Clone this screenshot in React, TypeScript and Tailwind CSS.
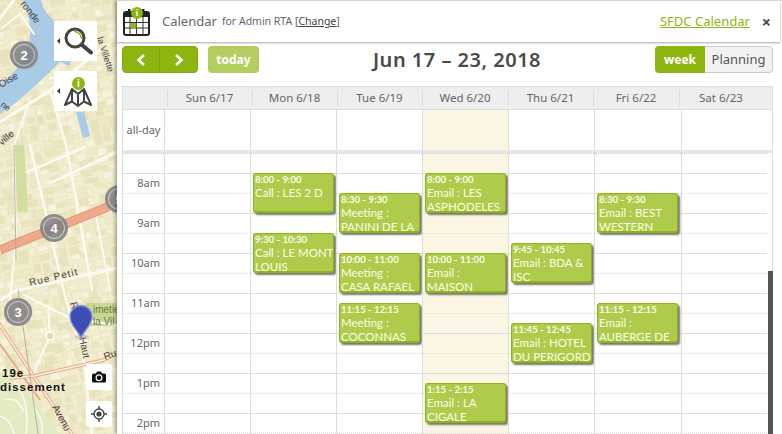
const font = "font-['Noto_Sans','Open_Sans',sans-serif]";

const hours = ["", "8am", "", "9am", "", "10am", "", "11am", "", "12pm", "", "1pm", "", "2pm"];

const days = [
  { label: "Sun 6/17", events: [] },
  {
    label: "Mon 6/18",
    events: [
      { start: 8, time: "8:00 - 9:00", title: "Call : LES 2 D" },
      { start: 9.5, time: "9:30 - 10:30", title: "Call\u00a0:\u00a0LE\u00a0MONT LOUIS" },
    ],
  },
  {
    label: "Tue 6/19",
    events: [
      { start: 8.5, time: "8:30 - 9:30", title: "Meeting : PANINI DE LA" },
      { start: 10, time: "10:00 - 11:00", title: "Meeting : CASA RAFAEL" },
      { start: 11.25, time: "11:15 - 12:15", title: "Meeting : COCONNAS" },
    ],
  },
  {
    label: "Wed 6/20",
    today: true,
    events: [
      { start: 8, time: "8:00 - 9:00", title: "Email : LES ASPHODELES" },
      { start: 10, time: "10:00 - 11:00", title: "Email : MAISON" },
      { start: 13.25, time: "1:15 - 2:15", title: "Email : LA CIGALE" },
    ],
  },
  {
    label: "Thu 6/21",
    events: [
      { start: 9.75, time: "9:45 - 10:45", title: "Email : BDA & ISC" },
      { start: 11.75, time: "11:45 - 12:45", title: "Email : HOTEL DU PERIGORD" },
    ],
  },
  {
    label: "Fri 6/22",
    wide: true,
    events: [
      { start: 8.5, time: "8:30 - 9:30", title: "Email : BEST WESTERN" },
      { start: 11.25, time: "11:15 - 12:15", title: "Email : AUBERGE DE" },
    ],
  },
  { label: "Sat 6/23", events: [] },
];

type Ev = { start: number; time: string; title: string };

// blocks for the map background, same numbers on every render
function blocks() {
  const out: { x: number; y: number; w: number; h: number; c: string }[] = [];
  let seed = 7;
  const rnd = () => {
    seed = (seed * 16807) % 2147483647;
    return seed / 2147483647;
  };
  const tones = ["#efe9c8", "#f4efd3", "#ebe5bf", "#f7f3dc", "#e9e3bb"];
  for (let y = -40; y < 480; y += 9) {
    for (let x = -40; x < 170; x += 10) {
      out.push({
        x: x + rnd() * 3,
        y: y + rnd() * 3,
        w: 5 + rnd() * 6,
        h: 4 + rnd() * 5,
        c: tones[Math.floor(rnd() * tones.length)],
      });
    }
  }
  return out;
}

function MapArt() {
  return (
    <svg width="117" height="434" viewBox="0 0 117 434" className="block">
      <rect width="117" height="434" fill="#f1edcf" />
      <g transform="rotate(-14 58 217)">
        {blocks().map((b, i) => (
          <rect key={i} x={b.x} y={b.y} width={b.w} height={b.h} fill={b.c} stroke="#e0dab2" strokeWidth="0.4" />
        ))}
      </g>
      {/* parks */}
      <path d="M14 145 L24 145 L28 212 L18 212 Z" fill="#d3dda0" />
      <path d="M0 372 L28 392 L60 434 L0 434 Z" fill="#e2ebc2" />
      <path d="M5 400 Q18 396 24 412 M14 382 Q30 398 26 434 M0 416 Q12 420 14 434 M34 408 Q44 420 42 434" fill="none" stroke="#fbfbf2" strokeWidth="1.6" />
      <path d="M86 303 H117 V326 H86 Z" fill="#c9d793" />
      {/* water */}
      <path d="M23 0 L41 0 Q44 14 58 24 L70 30 L70 66 L60 62 Q36 86 14 104 L0 114 L0 84 Q18 72 27 50 Q35 30 23 0 Z" fill="#a9cbe6" />
      <path d="M76 112 L84 112 L90 136 L83 138 Z" fill="#a9cbe6" />
      {/* white roads */}
      <g fill="none" stroke="#fbfaf3" strokeLinecap="round">
        <path d="M0 18 L14 0" strokeWidth="3" />
        <path d="M2 28 L20 14 L34 34" strokeWidth="2" />
        <path d="M0 122 L48 92 L100 50" strokeWidth="3" />
        <path d="M50 90 L66 145 L78 210 L92 290" strokeWidth="2.5" />
        <path d="M30 100 L14 145 L16 240 L10 300" strokeWidth="2" />
        <path d="M30 145 L63 288 L72 320" strokeWidth="2.5" />
        <path d="M27 172 L85 147" strokeWidth="2.5" />
        <path d="M50 183 L117 152" strokeWidth="2.5" />
        <path d="M0 300 L15 291 L117 268" strokeWidth="3" />
        <path d="M95 210 L110 290" strokeWidth="2" />
        <path d="M24 295 L70 318 L117 325" strokeWidth="2.5" />
        <path d="M48 306 L50 336 L34 372" strokeWidth="2" />
        <path d="M70 320 L82 345 L92 434" strokeWidth="2.5" />
      </g>
      <circle cx="50" cy="336" r="4" fill="#d8dcae" stroke="#fbfaf3" strokeWidth="2" />
      {/* main roads */}
      <path d="M0 250 L12 245 L108 207" fill="none" stroke="#d8917a" strokeWidth="9" />
      <path d="M0 250 L12 245 L108 207" fill="none" stroke="#f0a88a" strokeWidth="7.5" />
      <path d="M-2 322 L72 434" fill="none" stroke="#eaa88c" strokeWidth="3.5" />
      <path d="M-2 322 L72 434" fill="none" stroke="#fbf3e2" strokeWidth="1.5" />
      <path d="M0 344 L40 400" fill="none" stroke="#eaa88c" strokeWidth="2" />
      <path d="M10 378 L34 376 L104 360 L117 352" fill="none" stroke="#eaa88c" strokeWidth="3.5" />
      <path d="M10 378 L34 376 L104 360 L117 352" fill="none" stroke="#fbf3e2" strokeWidth="1.5" />
      {/* rail line */}
      <path d="M14 145 L16 260 M18 290 L38 434" stroke="#a8a58c" strokeWidth="0.8" fill="none" />
      {/* labels */}
      <g className="font-['Liberation_Sans',sans-serif]" fill="#444">
        <text transform="translate(20 4) rotate(52)" fontSize="10">ronde</text>
        <text transform="translate(1 88) rotate(-30)" fontSize="10">Oise</text>
        <text transform="translate(0 106) rotate(35)" fontSize="9">ne</text>
        <text transform="translate(2 146) rotate(-42)" fontSize="10">ville</text>
        <text transform="translate(97 38) rotate(72)" fontSize="9">la Villette</text>
        <text transform="translate(30 286) rotate(-13)" fontSize="10" letterSpacing="1">Rue Petit</text>
        <text transform="translate(70 303) rotate(74)" fontSize="10">Rue</text>
        <text transform="translate(79 338) rotate(78)" fontSize="10">Haut</text>
        <text transform="translate(105 360) rotate(-18)" fontSize="10">Ru</text>
        <text transform="translate(52 407) rotate(62)" fontSize="10">Avenu</text>
        <text x="93" y="313" fontSize="10" fill="#667a45">imetie</text>
        <text x="93" y="325" fontSize="10" fill="#667a45">la Vil</text>
      </g>
      <g className="font-['Liberation_Sans',sans-serif]" fill="#111" fontWeight="700" fontSize="11.5" letterSpacing="1">
        <text x="2" y="377">19e</text>
        <text x="0" y="391">dissement</text>
      </g>
    </svg>
  );
}

function Cluster({ n, className }: { n: number; className: string }) {
  return (
    <div className={`absolute w-[28px] h-[28px] rounded-full bg-[#77777c]/80 border-[2px] border-[#8c8c8c] flex items-center justify-center ${className}`}>
      <div className="absolute inset-[1px] rounded-full border border-white/60" />
      <span className="text-white text-[13px] font-semibold leading-none font-['Liberation_Sans',sans-serif]">{n}</span>
    </div>
  );
}

function InfoDot({ className, size }: { className: string; size: string }) {
  return (
    <div className={`absolute rounded-full bg-[#8db510] text-white font-bold flex items-center justify-center leading-none font-['Liberation_Sans',sans-serif] ${size} ${className}`}>
      i
    </div>
  );
}

function ToolButton({ children }: { children: React.ReactNode }) {
  return (
    <div className="relative w-[43px] h-[40px] bg-white flex items-center justify-center">
      <svg width="3" height="6" viewBox="0 0 3 6" className="absolute left-[3px] top-[17px]">
        <path d="M3 0 L0 3 L3 6 Z" fill="#333" />
      </svg>
      {children}
    </div>
  );
}

function SearchIcon() {
  return (
    <svg width="30" height="30" viewBox="0 0 30 30" className="ml-[5px]">
      <circle cx="12" cy="12" r="9" fill="#fff" stroke="#444" strokeWidth="3" />
      <path d="M11 5.5 A7 7 0 0 1 18.5 13 A9 9 0 0 0 11 5.5 Z" fill="#8db510" stroke="#8db510" strokeWidth="1" />
      <path d="M19 19 L28 26.5" stroke="#444" strokeWidth="4" strokeLinecap="round" />
    </svg>
  );
}

function LayersIcon() {
  return (
    <svg width="30" height="22" viewBox="0 0 30 22" className="ml-[5px] mt-[12px]">
      <path d="M2 19 L9 3 L15 8 L21 3 L28 19 L21 15.5 L15 20 L9 15.5 Z M9 3 L9 15.5 M21 3 L21 15.5 M15 8 L15 20" fill="none" stroke="#444" strokeWidth="2" strokeLinejoin="round" />
    </svg>
  );
}

function CalendarIcon() {
  return (
    <div className="relative w-[27px] h-[29px]">
      <svg width="27" height="29" viewBox="0 0 27 29" className="absolute left-0 top-[1px]">
        <rect x="1" y="4" width="25" height="23" rx="2" fill="#fff" stroke="#222" strokeWidth="2" />
        <rect x="1" y="4" width="25" height="5" fill="#222" />
        <rect x="5" y="1" width="2.5" height="6" fill="#222" />
        <rect x="19" y="1" width="2.5" height="6" fill="#222" />
        <path d="M7 9 V27 M13.5 9 V27 M20 9 V27 M1 14.5 H26 M1 20 H26" stroke="#333" strokeWidth="1" />
        <rect x="7.5" y="15" width="6" height="5" fill="#8db510" />
      </svg>
      <InfoDot className="left-[8px] top-[0px]" size="w-[12px] h-[12px] text-[9px]" />
    </div>
  );
}

function Chevron({ dir }: { dir: "left" | "right" }) {
  return (
    <svg width="10" height="12" viewBox="0 0 10 12">
      <path d={dir === "left" ? "M8 1 L2.5 6 L8 11" : "M2 1 L7.5 6 L2 11"} fill="none" stroke="#fff" strokeWidth="2.6" />
    </svg>
  );
}

function Event({ ev }: { ev: Ev }) {
  return (
    <div
      className="absolute left-[2px] w-[81px] h-[40px] overflow-hidden rounded-[3px] bg-[#aecb4b] border border-[#8fb514] border-b-2 shadow-[2px_2px_2px_#777] pl-[1px] text-[#fcfde8] font-['Lato',sans-serif]"
      style={{ top: (ev.start - 7.5) * 40 }}
    >
      <div className="text-[9.6px] leading-[12px] font-bold whitespace-nowrap">{ev.time}</div>
      <div className="text-[11.5px] leading-[14px]">{ev.title}</div>
    </div>
  );
}

function TimeRows({ labels }: { labels?: string[] }) {
  return (
    <>
      {hours.map((h, i) => (
        <div
          key={i}
          className={`h-[20px] border-b border-[#dddddd] text-right pr-[4px] text-[11px] leading-[18px] text-[#666666] ${i % 2 === 0 ? "border-solid" : "border-dotted"}`}
        >
          {labels ? h : ""}
        </div>
      ))}
    </>
  );
}

export default function App() {
  return (
    <div className={`relative w-[782px] h-[434px] overflow-hidden bg-white flex ${font}`}>
      {/* map */}
      <div className="relative w-[117px] h-[434px] shrink-0 overflow-hidden">
        <MapArt />
        <Cluster n={2} className="left-[10px] top-[41px]" />
        <Cluster n={4} className="left-[40px] top-[214px]" />
        <Cluster n={3} className="left-[4px] top-[298px]" />
        <Cluster n={5} className="left-[105px] top-[185px]" />
        <div className="absolute left-[54px] top-[21px] flex flex-col gap-[10px]">
          <ToolButton>
            <SearchIcon />
          </ToolButton>
          <ToolButton>
            <LayersIcon />
            <InfoDot className="left-[18px] top-[6px]" size="w-[13px] h-[13px] text-[10px]" />
          </ToolButton>
        </div>
        {/* pin */}
        <svg width="26" height="36" viewBox="0 0 26 36" className="absolute left-[68px] top-[304px]">
          <ellipse cx="14" cy="33" rx="7" ry="2.5" fill="#888" opacity="0.35" />
          <path d="M13 34 C10 26 2 22 2 12.5 A11 11 0 0 1 24 12.5 C24 22 16 26 13 34 Z" fill="#3e4eb4" stroke="#8d96d2" strokeWidth="1.4" />
        </svg>
        <div className="absolute left-[86px] top-[364px] flex flex-col gap-[11px]">
          <div className="w-[26px] h-[26px] rounded-[3px] bg-white flex items-center justify-center">
            <svg width="14" height="12" viewBox="0 0 14 12">
              <path d="M1.5 2.5 H4 L5 .5 H9 L10 2.5 H12.5 A1.5 1.5 0 0 1 14 4 V10 A1.5 1.5 0 0 1 12.5 11.5 H1.5 A1.5 1.5 0 0 1 0 10 V4 A1.5 1.5 0 0 1 1.5 2.5 Z" fill="#111" />
              <circle cx="7" cy="6.8" r="2.9" fill="#111" stroke="#fff" strokeWidth="1.2" />
            </svg>
          </div>
          <div className="w-[26px] h-[26px] rounded-[3px] bg-white flex items-center justify-center">
            <svg width="16" height="16" viewBox="0 0 16 16">
              <circle cx="8" cy="8" r="5" fill="none" stroke="#444" strokeWidth="1.4" />
              <circle cx="8" cy="8" r="2.6" fill="#444" />
              <path d="M8 0 V3 M8 13 V16 M0 8 H3 M13 8 H16" stroke="#444" strokeWidth="1.4" />
            </svg>
          </div>
        </div>
      </div>

      {/* calendar panel */}
      <div className="relative flex-1 flex flex-col bg-white shadow-[-2px_0_3px_rgba(0,0,0,0.3)] border-t border-[#dddddd]">
        <div className="h-[41px] flex items-center pl-[6px] pr-[9px] shadow-[0_1px_2px_rgba(0,0,0,0.35)] mr-[2px]">
          <CalendarIcon />
          <span className="ml-[12px] text-[13px] text-[#666666]">Calendar</span>
          <span className="ml-[5px] text-[10.5px] text-[#666666] mt-[1px]">
            for Admin RTA [<span className="underline text-[#444444]">Change</span>]
          </span>
          <span className="ml-auto text-[13px] text-[#8fb514] underline">SFDC Calendar</span>
          <span className="ml-[12px] text-[16px] leading-none font-bold text-[#444444]">×</span>
        </div>

        <div className="flex items-center mt-[4px] pl-[5px] pr-[9px] h-[27px]">
          <div className="flex h-[27px] w-[76px] rounded-[4px] bg-[#8db510] border border-[#83a80e] overflow-hidden">
            <div className="w-[37px] flex items-center justify-center border-r border-[#7c9f0c]">
              <Chevron dir="left" />
            </div>
            <div className="flex-1 flex items-center justify-center">
              <Chevron dir="right" />
            </div>
          </div>
          <div className="ml-[10px] w-[51px] h-[27px] rounded-[4px] bg-[#b3ce5f] flex items-center justify-center text-[12px] font-bold text-white">
            today
          </div>
          <div className="flex-1 text-center text-[20px] leading-none font-semibold tracking-[0.5px] text-[#4a4a4a]">
            Jun 17 – 23, 2018
          </div>
          <div className="flex h-[27px] text-[13px] rounded-[4px] overflow-hidden">
            <div className="w-[50px] bg-[#8db510] text-white font-bold text-[12px] flex items-center justify-center">week</div>
            <div className="w-[68px] bg-[#f2f2f2] border border-l-0 border-[#cccccc] rounded-r-[4px] text-[#555555] flex items-center justify-center">
              Planning
            </div>
          </div>
        </div>

        <div className="mt-[13px] ml-[5px] w-[651px] flex-1 min-h-0 flex flex-col border-t border-r border-[#dddddd] overflow-hidden">
          <div className="grid grid-cols-[44px_85px_85px_85px_86px_85px_86px_84px] h-[23px] shrink-0 bg-[#eeeeee] border-b border-[#dddddd] border-l">
            <div />
            {days.map((d) => (
              <div key={d.label} className="relative flex items-center justify-center text-[11.5px] text-[#666666]">
                <div className="absolute left-0 top-[3px] bottom-[3px] w-px bg-[#dddddd]" />
                {d.label}
              </div>
            ))}
          </div>

          <div className="flex h-[40px] shrink-0 border-l border-[#dddddd]">
            <div className="w-[41px] flex items-center justify-center text-[11px] text-[#666666]">all-day</div>
            {days.map((d, i) => (
              <div key={i} className={`border-l border-[#dddddd] ${d.wide ? "w-[87px]" : "w-[86px]"} ${d.today ? "bg-[#fbf6e3]" : ""}`} />
            ))}
          </div>

          <div className="h-[3px] shrink-0 bg-[#e6e6e6]" />

          <div className="relative flex flex-1 min-h-0 border-l border-[#dddddd] w-[646px]">
            <div className="w-[41px] shrink-0 border-t border-dotted border-[#cccccc]">
              <TimeRows labels={hours} />
            </div>
            {days.map((d, i) => (
              <div
                key={i}
                className={`relative shrink-0 border-l border-[#dddddd] border-t-0 ${d.wide ? "w-[87px]" : "w-[86px]"} ${d.today ? "bg-[#fbf6e3]" : ""}`}
              >
                <div className="border-t border-dotted border-[#cccccc]">
                  <TimeRows />
                </div>
                {d.events.map((ev: Ev) => (
                  <Event key={ev.time} ev={ev} />
                ))}
              </div>
            ))}
          </div>
        </div>

        {/* scrollbar thumb */}
        <div className="absolute left-[651px] top-[270px] w-[5px] h-[164px] bg-[#555555]" />
      </div>
    </div>
  );
}
